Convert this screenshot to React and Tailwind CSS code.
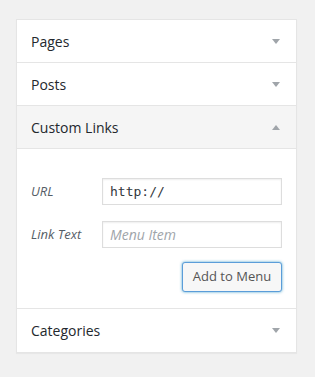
import React from "react";

function Tri({ up }) {
  return (
    <svg width="8" height="5" viewBox="0 0 8 5" className="shrink-0">
      {up ? <polygon points="0,5 8,5 4,0" fill="#a0a5aa" /> : <polygon points="0,0 8,0 4,5" fill="#a0a5aa" />}
    </svg>
  );
}

function Row({ title, up, gray, last }) {
  return (
    <div className={`flex h-[43px] items-center justify-between pl-[14px] pr-[16px] ${last ? "" : "border-b border-[#e5e5e5]"} ${gray ? "bg-[#f5f5f5]" : "bg-white"}`}>
      <span className="text-[14px] text-[#23282d]">{title}</span>
      <Tri up={up} />
    </div>
  );
}

export default function App() {
  return (
    <div className="min-h-[377px] bg-[#f1f1f1] pl-4 pt-[19px]" style={{ fontFamily: '"Open Sans", "Noto Sans", sans-serif' }}>
      <div className="w-[281px] border border-[#e5e5e5] bg-white shadow-[0_1px_1px_rgba(0,0,0,0.04)]">
        <Row title="Pages" />
        <Row title="Posts" />
        <Row title="Custom Links" up gray />
        <div className="border-b border-[#e5e5e5] px-[14px] pb-[16px] pt-[29px]">
          <div className="flex items-center">
            <span className="w-[71px] text-[13px] italic text-[#555d66]">URL</span>
            <div className="flex h-[27px] w-[180px] items-center border border-[#dddddd] px-[7px] text-[#32373c] shadow-[inset_0_1px_2px_rgba(0,0,0,0.07)]" style={{ fontFamily: '"DejaVu Sans Mono", monospace', fontSize: "13px" }}>
              http://
            </div>
          </div>
          <div className="mt-[16px] flex items-center">
            <span className="w-[71px] text-[13px] italic text-[#555d66]">Link Text</span>
            <div className="flex h-[27px] w-[180px] items-center border border-[#dddddd] px-[7px] text-[14px] italic text-[#a0a5aa] shadow-[inset_0_1px_2px_rgba(0,0,0,0.07)]">
              Menu Item
            </div>
          </div>
          <div className="mt-[14px] flex justify-end">
            <div className="flex h-[30px] w-[100px] items-center justify-center rounded-[3px] border border-[#5b9dd9] bg-[#f7f7f7] text-[13px] text-[#555] shadow-[0_0_3px_rgba(30,140,190,0.8)]">
              Add to Menu
            </div>
          </div>
        </div>
        <Row title="Categories" last />
      </div>
    </div>
  );
}
